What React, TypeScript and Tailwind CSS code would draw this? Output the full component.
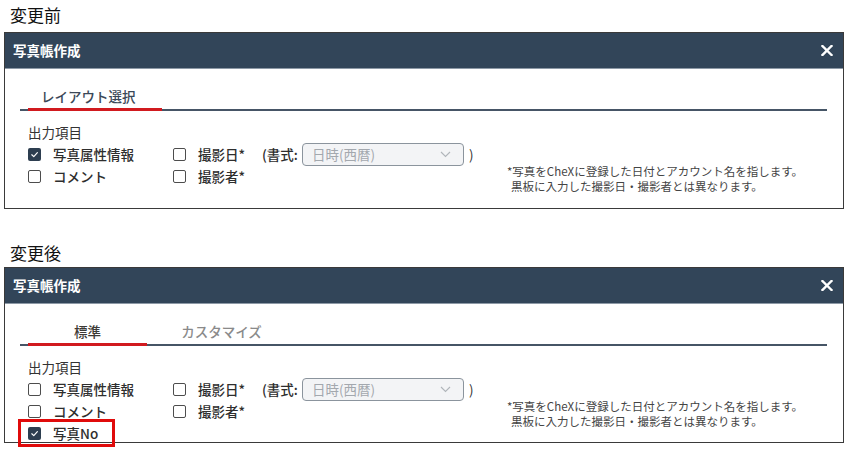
import React from "react";

function Box({ checked }: { checked?: boolean }) {
  if (checked) {
    return (
      <span className="flex h-[13px] w-[13px] shrink-0 items-center justify-center rounded-[2px] bg-[#2d3e50]">
        <svg width="9" height="9" viewBox="0 0 10 10">
          <path d="M2 5.3 L4.2 7.4 L8.2 3" stroke="white" strokeWidth="1.3" fill="none" strokeLinecap="round" strokeLinejoin="round" />
        </svg>
      </span>
    );
  }
  return <span className="h-[13px] w-[13px] shrink-0 rounded-[2px] border-[1.5px] border-[#4d4d4d] bg-white" />;
}

function Item({ checked, label }: { checked?: boolean; label: string }) {
  return (
    <div className="flex h-[22px] items-center gap-[12px]">
      <Box checked={checked} />
      <span className="text-[13.5px] font-medium leading-[22px] text-[#2e2e2e]">{label}</span>
    </div>
  );
}

function Panel({ after }: { after?: boolean }) {
  return (
    <div className={`ml-[4px] w-[840px] border border-[#3a3a3a] bg-white ${after ? "h-[176px]" : "h-[177px]"}`}>
      <div className="flex h-[36px] items-center justify-between border-b border-[#8d99a6] bg-[#324559] pl-[8px] pr-[10px]">
        <span className="text-[13.5px] font-bold text-white">写真帳作成</span>
        <svg width="12" height="11" viewBox="0 0 12 11">
          <path d="M1.5 1 L10.5 10 M10.5 1 L1.5 10" stroke="white" strokeWidth="2.4" strokeLinecap="square" />
        </svg>
      </div>
      <div className="ml-[15px] mr-[16px] mt-[17px] flex border-b-2 border-[#465566]">
        {after ? (
          <>
            <div className="-mb-[2px] ml-[8px] w-[119px] border-b-[3px] border-[#d11a1f] pb-[2px] text-center text-[13.5px] font-medium leading-[20px] text-[#3d3a36]">
              標準
            </div>
            <div className="-mb-[2px] w-[149px] border-b-[3px] border-transparent pb-[2px] text-center text-[13.5px] font-medium leading-[20px] text-[#8a8a8a]">
              カスタマイズ
            </div>
          </>
        ) : (
          <div className="-mb-[2px] ml-[8px] w-[134px] border-b-[3px] border-[#d11a1f] pb-[2px] pl-[13px] text-[13.5px] font-medium leading-[20px] text-[#3b4858]">
            レイアウト選択
          </div>
        )}
      </div>
      <div className="pl-[23px]">
        <div className="mt-[11px] text-[13.5px] leading-[20px] text-[#333]">出力項目</div>
        <div className="mt-[1px] flex">
          <div className="flex w-[145px] flex-col">
            <Item checked={!after} label="写真属性情報" />
            <Item label="コメント" />
            {after && (
              <div className="relative">
                <Item checked label="写真No" />
                <div className="absolute -left-[10px] -top-[3px] h-[28px] w-[97px] border-[3px] border-[#e00b0b]" />
              </div>
            )}
          </div>
          <div className="flex w-[334px] flex-col">
            <div className="flex h-[22px] items-center">
              <Item label="撮影日*" />
              <span className="ml-[17px] text-[13.5px] font-medium text-[#2e2e2e]">(書式:</span>
              <div className="ml-[4px] flex h-[23px] w-[162px] items-center justify-between rounded-[4px] border border-[#8b949d] bg-[#f3f4f6] pl-[9px] pr-[12px]">
                <span className="text-[13.5px] text-[#a3a8ae]">日時(西暦)</span>
                <svg width="11" height="7" viewBox="0 0 11 7">
                  <path d="M1 1 L5.5 5.5 L10 1" stroke="#b0b5ba" strokeWidth="1.1" fill="none" />
                </svg>
              </div>
              <span className="ml-[5px] text-[13.5px] text-[#333]">)</span>
            </div>
            <Item label="撮影者*" />
          </div>
          <div className="mt-[21px] text-[11.5px] leading-[15px] text-[#444]">
            <div>*写真をCheXに登録した日付とアカウント名を指します。</div>
            <div className="pl-[4px]">黒板に入力した撮影日・撮影者とは異なります。</div>
          </div>
        </div>
      </div>
    </div>
  );
}

export default function App() {
  return (
    <div className="h-[451px] w-[849px] overflow-hidden bg-white font-['Noto_Sans_CJK_JP',sans-serif]">
      <div className="h-[32px] pl-[10px] text-[17px] leading-[29px] text-[#111]">変更前</div>
      <Panel />
      <div className="h-[58px] pl-[10px] pt-[29px] text-[17px] leading-[29px] text-[#111]">変更後</div>
      <Panel after />
    </div>
  );
}
